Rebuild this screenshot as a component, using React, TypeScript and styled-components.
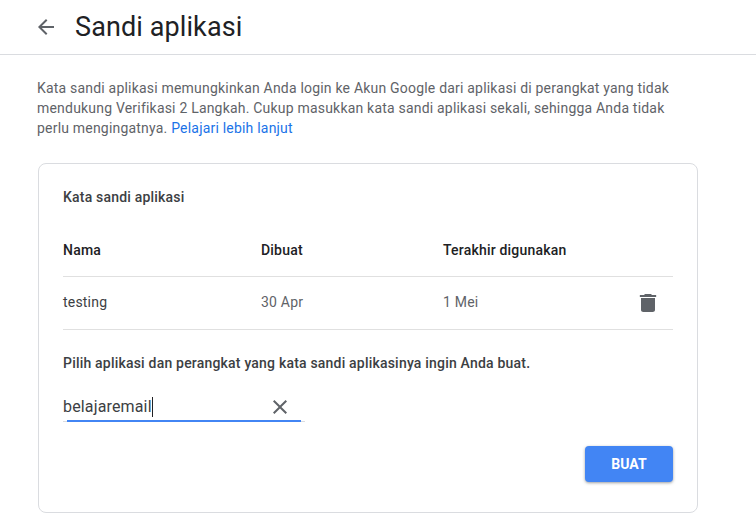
import React from "react";
import styled, { createGlobalStyle } from "styled-components";

const GlobalStyle = createGlobalStyle`
    html, body {
        margin: 0;
        padding: 0;
        background: #fff;
        font-family: Roboto, "Liberation Sans", sans-serif;
        overflow: hidden;
    }
`;

const Page = styled.div`
    width: 756px;
    height: 526px;
    overflow: hidden;
`;

const Header = styled.header`
    display: flex;
    align-items: center;
    height: 54px;
    padding-left: 34px;
    border-bottom: 1px solid #dadce0;
`;

const BackIcon = styled.svg`
    width: 24px;
    height: 24px;
    fill: #5f6368;
    margin-right: 17px;
`;

const Title = styled.h1`
    margin: 0;
    font-size: 27px;
    font-weight: 400;
    letter-spacing: 0.1px;
    color: #202124;
`;

const Main = styled.main`
    padding: 23px 0 0 37px;
    width: 661px;
`;

const Intro = styled.p`
    margin: 0;
    font-size: 14px;
    line-height: 20px;
    letter-spacing: 0.2px;
    color: #5f6368;
`;

const Link = styled.a`
    color: #1a73e8;
`;

const Card = styled.section`
    box-sizing: border-box;
    margin: 25px 0 0 1px;
    height: 350px;
    padding: 23px 24px 0;
    border: 1px solid #dadce0;
    border-radius: 8px;
`;

const CardTitle = styled.div`
    font-size: 14px;
    font-weight: 500;
    line-height: 20px;
    letter-spacing: 0.2px;
    color: #3c4043;
`;

const Row = styled.div<{ $head?: boolean }>`
    display: grid;
    grid-template-columns: 198px 182px 1fr 28px;
    align-items: center;
    height: ${({ $head }) => ($head ? "53px" : "50px")};
    padding-top: ${({ $head }) => ($head ? "16px" : "0")};
    padding-bottom: ${({ $head }) => ($head ? "0" : "2px")};
    padding-right: 11px;
    border-bottom: 1px solid #e0e0e0;
    font-size: 14px;
    letter-spacing: 0.2px;
    color: ${({ $head }) => ($head ? "#202124" : "#5f6368")};
    font-weight: ${({ $head }) => ($head ? 500 : 400)};
`;

const Name = styled.span`
    color: #3c4043;
`;

const TrashIcon = styled.svg`
    width: 28px;
    height: 24px;
    margin-top: 2px;
    fill: #5f6368;
`;

const Prompt = styled.div`
    margin-top: 23px;
    font-size: 14px;
    font-weight: 500;
    line-height: 20px;
    letter-spacing: 0.2px;
    color: #3c4043;
`;

const Field = styled.div`
    display: flex;
    align-items: center;
    justify-content: space-between;
    box-sizing: border-box;
    position: relative;
    width: 242px;
    height: 28px;
    margin-top: 21px;
    padding-bottom: 1px;
    border-bottom: 1px solid #dadce0;
`;

const Underline = styled.div`
    position: absolute;
    left: 4px;
    right: 4px;
    bottom: -1px;
    height: 2px;
    background: #4285f4;
`;

const Value = styled.div`
    font-size: 16px;
    line-height: 20px;
    letter-spacing: 0.15px;
    color: #3c4043;
    border-right: 1px solid #202124;
`;

const ClearIcon = styled.svg`
    width: 24px;
    height: 24px;
    fill: #5f6368;
    margin-right: 13px;
`;

const Actions = styled.div`
    display: flex;
    justify-content: flex-end;
    margin-top: 24px;
`;

const Button = styled.button`
    width: 88px;
    height: 36px;
    border: 0;
    border-radius: 4px;
    background: #4285f4;
    color: #fff;
    font-family: inherit;
    font-size: 14px;
    font-weight: 700;
    box-shadow: 0 1px 3px rgba(60, 64, 67, 0.5);
`;

export default function App() {
    return (
        <Page>
            <GlobalStyle />
            <Header>
                <BackIcon viewBox="0 0 24 24">
                    <path d="M20 11H7.83l5.59-5.59L12 4l-8 8 8 8 1.41-1.41L7.83 13H20v-2z" />
                </BackIcon>
                <Title>Sandi aplikasi</Title>
            </Header>
            <Main>
                <Intro>
                    Kata sandi aplikasi memungkinkan Anda login ke Akun Google dari aplikasi di perangkat yang tidak
                    mendukung Verifikasi 2 Langkah. Cukup masukkan kata sandi aplikasi sekali, sehingga Anda tidak
                    perlu mengingatnya. <Link>Pelajari lebih lanjut</Link>
                </Intro>
                <Card>
                    <CardTitle>Kata sandi aplikasi</CardTitle>
                    <Row $head>
                        <span>Nama</span>
                        <span>Dibuat</span>
                        <span>Terakhir digunakan</span>
                    </Row>
                    <Row>
                        <Name>testing</Name>
                        <span>30 Apr</span>
                        <span>1 Mei</span>
                        <TrashIcon viewBox="0 0 24 24" preserveAspectRatio="none">
                            <path d="M6 19c0 1.1.9 2 2 2h8c1.1 0 2-.9 2-2V7H6v12zM19 4h-3.5l-1-1h-5l-1 1H5v2h14V4z" />
                        </TrashIcon>
                    </Row>
                    <Prompt>Pilih aplikasi dan perangkat yang kata sandi aplikasinya ingin Anda buat.</Prompt>
                    <Field>
                        <Value>belajaremail</Value>
                        <ClearIcon viewBox="0 0 24 24">
                            <path d="M19 6.41 17.59 5 12 10.59 6.41 5 5 6.41 10.59 12 5 17.59 6.41 19 12 13.41 17.59 19 19 17.59 13.41 12z" />
                        </ClearIcon>
                        <Underline />
                    </Field>
                    <Actions>
                        <Button>BUAT</Button>
                    </Actions>
                </Card>
            </Main>
        </Page>
    );
}
